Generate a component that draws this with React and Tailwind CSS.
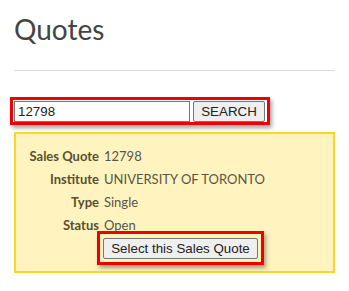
export default function App() {
  const rows = [
    ["Sales Quote", "12798"],
    ["Institute", "UNIVERSITY OF TORONTO"],
    ["Type", "Single"],
    ["Status", "Open"],
  ];
  return (
    <div className="w-[349px] h-[291px] bg-white overflow-hidden px-[14px]">
      <h1
        className="mt-[11px] text-[28px] leading-[36px] text-[#444444] font-normal"
        style={{ fontFamily: "Lato, sans-serif" }}
      >
        Quotes
      </h1>
      <div className="mt-[23px] h-px bg-[#dddddd] w-[321px]" />
      <div className="mt-[26px] -ml-[4px] w-[260px] h-[28px] border-[3px] border-[#ee0000] shadow-[2px_3px_4px_rgba(0,0,0,0.35)] flex items-start pl-px pt-px gap-[3px]"
        style={{ fontFamily: "Arial, 'Liberation Sans', sans-serif" }}>
        <div className="w-[176px] h-[21px] border border-[#767676] bg-white text-[13.33px] leading-[19px] pl-[3px] text-[#222]">
          12798
        </div>
        <div className="w-[72px] h-[21px] border border-[#767676] rounded-[2px] bg-[#efefef] text-[13.33px] leading-[19px] text-center text-[#222]">
          SEARCH
        </div>
      </div>
      <div className="mt-[7px] w-[321px] h-[141px] border-2 border-[#ffd42a] bg-[#fff4bf] pt-[11px]"
        style={{ fontFamily: "Lato, sans-serif" }}>
        {rows.map(([l, v]) => (
          <div key={l} className="flex h-[23px] items-center text-[13px]">
            <div className="w-[83px] text-right font-bold text-[#5a5030]">{l}</div>
            <div className="ml-[5px] text-[#57544a]">{v}</div>
          </div>
        ))}
        <div className="-mt-[6px] ml-[81px] w-[167px] h-[34px] border-[3px] border-[#ee0000] shadow-[2px_3px_4px_rgba(0,0,0,0.35)] pl-[3px] pt-[4px]">
          <div className="w-[155px] h-[21px] border border-[#767676] rounded-[2px] bg-[#efefef] text-[13.33px] leading-[19px] text-center text-[#222]"
            style={{ fontFamily: "Arial, 'Liberation Sans', sans-serif" }}>
            Select this Sales Quote
          </div>
        </div>
      </div>
    </div>
  );
}
